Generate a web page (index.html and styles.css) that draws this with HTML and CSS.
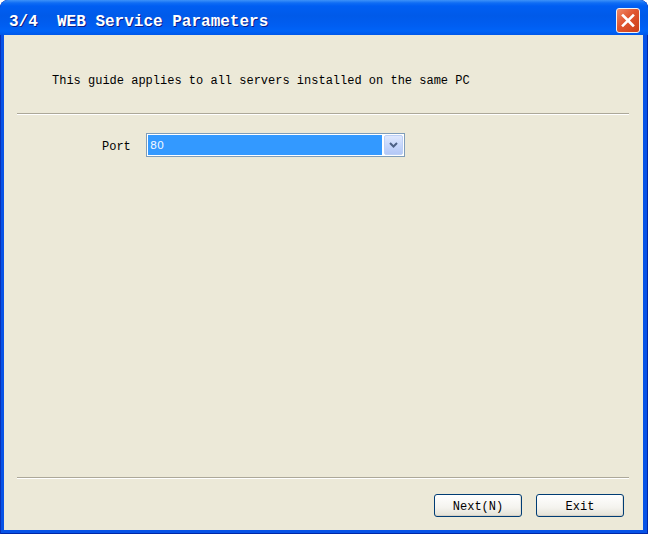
FILE: index.html
```html
<!DOCTYPE html>
<html>
<head>
<meta charset="utf-8">
<link rel="stylesheet" href="styles.css">
</head>
<body>
<div class="window">
  <div class="titlebar">
    <div class="title">3/4&nbsp;&nbsp;WEB Service Parameters</div>
    <div class="close">
      <svg width="22" height="23" viewBox="0 0 22 23"><path d="M6 6.5 L16 16.5 M16 6.5 L6 16.5" stroke="#fff" stroke-width="2.6" stroke-linecap="square"/></svg>
    </div>
  </div>
  <div class="client">
    <div class="intro">This guide applies to all servers installed on the same PC</div>
    <div class="sep sep-top"></div>
    <div class="row">
      <div class="label">Port</div>
      <div class="combo">
        <div class="combo-value">80</div>
        <div class="combo-btn">
          <svg width="9" height="6" viewBox="0 0 9 6"><path d="M1 1 L4.5 4.5 L8 1" fill="none" stroke="#4d6185" stroke-width="2"/></svg>
        </div>
      </div>
    </div>
    <div class="spacer"></div>
    <div class="sep"></div>
    <div class="buttons">
      <div class="btn">Next(N)</div>
      <div class="btn">Exit</div>
    </div>
  </div>
</div>
</body>
</html>
```
FILE: styles.css
```css
html, body {
  margin: 0;
  padding: 0;
  background: #ffffff;
}
.window {
  width: 648px;
  height: 534px;
  display: flex;
  flex-direction: column;
  background: #0752e6;
  border-radius: 8px 8px 0 0;
  box-shadow: inset 1px 0 0 #0831b8, inset -1px 0 0 #0027a8, inset 0 -1px 0 #0027a8;
  overflow: hidden;
}
.titlebar {
  height: 35px;
  box-sizing: border-box;
  display: flex;
  align-items: flex-start;
  padding: 8px 8px 0 9px;
  background: linear-gradient(to bottom, #3d92f8 0px, #0f6cf4 3px, #005ef2 6px, #005ae9 16px, #005ef2 26px, #0064f8 31px, #0058ea 35px);
  border-radius: 8px 8px 0 0;
}
.title {
  flex: 1;
  font-family: "Liberation Mono", monospace;
  font-weight: bold;
  font-size: 16px;
  line-height: 25px;
  padding-top: 2px;
  color: #ffffff;
  text-shadow: 1px 1px 0 #0a1d8a;
  white-space: pre;
}
.close {
  width: 22px;
  height: 23px;
  border: 1px solid #f2f2f2;
  border-radius: 3px;
  background: linear-gradient(135deg, #f08a68 0%, #e0552f 45%, #cc3f18 100%);
  display: flex;
}
.client {
  flex: 1;
  margin: 0 5px 4px 4px;
  background: #ece9d8;
  display: flex;
  flex-direction: column;
  font-family: "Liberation Mono", monospace;
  font-size: 12px;
  color: #000;
}
.intro {
  margin-top: 37px;
  padding-top: 2px;
  padding-left: 48px;
  line-height: 14px;
  height: 12px;
}
.sep {
  margin: 0 14px 0 13px;
  border-top: 1px solid #aca899;
  border-bottom: 1px solid #ffffff;
  height: 0;
}
.sep-top {
  margin-top: 27px;
}
.row {
  margin-top: 18px;
  display: flex;
  align-items: center;
  padding-left: 98px;
}
.label {
  width: 44px;
  line-height: 14px;
  margin-top: 3px;
}
.combo {
  width: 259px;
  height: 24px;
  box-sizing: border-box;
  border: 1px solid #7f9db9;
  background: #ffffff;
  padding: 1px;
  display: flex;
}
.combo-value {
  flex: 1;
  margin-right: 2px;
  background: #3399ff;
  color: #eef6ff;
  font-family: "DejaVu Sans", sans-serif;
  font-size: 11px;
  line-height: 21px;
  padding-left: 2px;
}
.combo-btn {
  width: 19px;
  box-sizing: border-box;
  border: 1px solid #bccff6;
  border-radius: 2px;
  background: linear-gradient(to bottom, #dfe8fd 0%, #c7d7fb 50%, #b4c8f6 100%);
  display: flex;
  align-items: center;
  justify-content: center;
}
.spacer {
  flex: 1;
}
.buttons {
  display: flex;
  justify-content: flex-end;
  gap: 14px;
  margin-top: 15px;
  margin-bottom: 13px;
  padding-right: 19px;
}
.btn {
  width: 88px;
  height: 23px;
  box-sizing: border-box;
  border: 1px solid #003c74;
  border-radius: 3px;
  background: linear-gradient(to bottom, #ffffff 0%, #f4f3ee 60%, #e3e1d6 100%);
  box-shadow: inset 0 -1px 0 #d6d0c5, inset -1px 0 0 #e3e0d6;
  text-align: center;
  line-height: 24px;
  font-size: 12px;
  overflow: hidden;
}
```
